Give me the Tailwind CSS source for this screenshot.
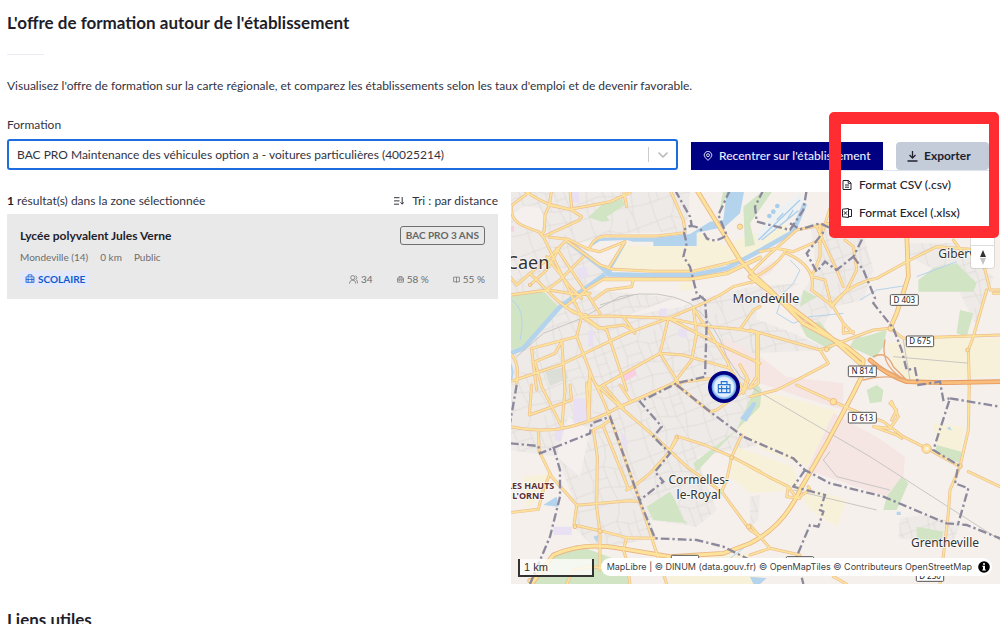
<!DOCTYPE html>
<html lang="fr">
<head>
<meta charset="utf-8">
<meta name="viewport" content="width=device-width, initial-scale=1">
<title>L'offre de formation autour de l'établissement</title>
<script src="https://cdn.jsdelivr.net/npm/@tailwindcss/browser@4"></script>
</head>
<body class="bg-white font-['Lato',sans-serif] text-[12px] leading-4 text-[#33333f] overflow-x-hidden">
<main class="relative pl-[7px]">
  <h2 class="pt-[13px] text-[17px] leading-5 font-bold text-[#1e1e2b]">L'offre de formation autour de l'établissement</h2>
  <hr class="mt-[21px] w-[37px] border-0 h-px bg-[#ececf6]">
  <p class="mt-[23px]">Visualisez l'offre de formation sur la carte régionale, et comparez les établissements selon les taux d'emploi et de devenir favorable.</p>

  <div class="mt-[23px] flex items-end pr-[11px]">
    <div class="flex-1">
      <label for="formation" class="block">Formation</label>
      <div class="relative mt-[6px]">
        <select id="formation" class="block w-full h-[31px] appearance-none rounded-[3px] border-2 border-[#1d6ce0] bg-white pl-2 pr-9 text-[12px] text-[#33333f] outline-none">
          <option>BAC PRO Maintenance des véhicules option a - voitures particulières (40025214)</option>
        </select>
        <span class="pointer-events-none absolute inset-y-2 right-[10px] flex w-5 items-center justify-end border-l border-[#cccccc]">
          <svg class="w-[10px] h-[6px]" viewBox="0 0 10 6" fill="none" stroke="#b8b8b8" stroke-width="1.6" stroke-linecap="round" stroke-linejoin="round"><path d="M1 1l4 4 4-4"/></svg>
        </span>
      </div>
    </div>
    <button type="button" class="ml-[13px] flex h-7 w-[192px] items-center gap-[6px] bg-[#000083] pl-3 font-medium whitespace-nowrap text-[#eeeeff]">
      <svg class="size-[10px] shrink-0" viewBox="0 0 24 24" fill="none" stroke="currentColor" stroke-width="2.2"><path d="M12 22.5l-6.4-6.4a9 9 0 1 1 12.8 0z"/><circle cx="12" cy="10" r="3.5"/></svg>
      Recentrer sur l'établissement
    </button>
    <button type="button" aria-expanded="true" class="ml-[13px] flex h-7 w-[93px] items-center gap-[6px] rounded-[4px] bg-[#c4ccda] pl-[11px] font-bold text-[#22222f]">
      <svg class="size-[11px]" viewBox="0 0 11 11" fill="none" stroke="currentColor" stroke-width="1.3"><path d="M5.500 0v7M2.500 4l3 3 3-3M.5 10h10"/></svg>
      Exporter
    </button>
  </div>

  <div class="mt-[22px] grid grid-cols-[491fr_489fr] gap-[13px]">
    <section>
      <div class="flex h-[22px] items-start justify-between pt-px">
        <p><b class="text-[#1e1e2b]">1</b> résultat(s) dans la zone sélectionnée</p>
        <button type="button" class="flex items-center gap-2 leading-4">
          <svg class="h-2 w-[10px]" viewBox="0 0 10 8" fill="none" stroke="#33333f"><path d="M0 .7h5.500M0 3.900h5.500M0 7.200h5M8.200 0v7M6.500 5.300l1.700 1.900 1.700-1.900"/></svg>
          Tri : par distance
        </button>
      </div>
      <article class="bg-[#e9e9e9] px-[13px] pt-3 pb-3 text-[10px] text-[#6d6d6d]">
        <div class="flex items-center justify-between">
          <h3 class="text-[12px] font-bold text-[#1e1e2b]"><a href="#">Lycée polyvalent Jules Verne</a></h3>
          <span class="rounded-[3px] border border-[#6f6f6f] px-[5px] leading-[17px] font-bold text-[#666666]">BAC PRO 3 ANS</span>
        </div>
        <p class="mt-1 flex gap-3"><span>Mondeville (14)</span><span>0 km</span><span>Public</span></p>
        <div class="mt-[6px] flex items-center justify-between">
          <span class="flex items-center gap-[3px] rounded-[2px] bg-[#e4e8fb] px-[5px] font-bold text-[#0e5bce]">
            <svg class="size-[10px]" viewBox="0 0 24 24" fill="none" stroke="currentColor" stroke-width="2"><path d="M7.500 7V2h9v5M2.500 7h19v13h-19zM2.500 13h19M7.500 10v10M16.500 10v10"/></svg>
            SCOLAIRE
          </span>
          <span class="flex text-[10px]">
            <span class="flex items-center gap-[3px]"><svg class="size-[9px]" viewBox="0 0 24 24" fill="none" stroke="currentColor" stroke-width="2"><circle cx="10" cy="7" r="5.500"/><path d="M1.500 23c0-6 3.500-9 8.500-9s8 3 8 9M17 2c5 1 5 8 1 10 3 1 5 5 5 10"/></svg>34</span>
            <span class="ml-6 flex items-center gap-[3px]"><svg class="size-[7px]" viewBox="0 0 24 24" fill="none" stroke="currentColor" stroke-width="2.500"><path d="M7 7V2h10v5M2 7h20v14H2zM2 13h20M8 13v4M16 13v4"/></svg>58 %</span>
            <span class="ml-6 flex items-center gap-[3px]"><svg class="size-[7px]" viewBox="0 0 24 24" fill="none" stroke="currentColor" stroke-width="2.500"><path d="M2 4h20v16H2zM12 4v19"/></svg>55 %</span>
          </span>
        </div>
      </article>
    </section>

    <section aria-label="Carte" class="relative overflow-hidden">
      <svg class="block w-full" viewBox="3 6 1467 1176" font-family="Noto Sans, sans-serif">
        <defs>
          <pattern id="rues" width="190" height="170" patternUnits="userSpaceOnUse" patternTransform="rotate(-14)">
            <path d="M0 30L70 22L110 40L190 30M0 92L60 84L130 100L190 92M0 140L90 132L190 140M22 0L30 60L20 120L22 170M70 22L78 84L90 132L84 170M84 0L70 22M128 0L126 40L130 100L150 170M150 0L160 95L150 170M40 88L46 136M100 36L106 94M30 60L76 58M126 66L158 64" fill="none" stroke="#dcd8d4" stroke-width="2"/>
          </pattern>
          <g id="zones">
            <path d="M0 0H540L530 125L350 130L250 150L180 165L300 240L250 300L560 330L720 290L870 280L740 350L730 560L780 760L560 800L620 960L560 1010L420 990L440 1040L260 1080L190 1010L200 950L140 800L0 780Z"/>
            <path d="M900 100H1050L1090 240L1060 330L970 350L930 430L850 350L920 240ZM720 380L850 430L960 480L720 490ZM1190 160H1330L1450 260L1400 410L1330 270L1200 200ZM1170 985L1240 975L1350 1000L1330 1060L1165 1045ZM720 920L750 915L745 990L720 1010Z"/>
          </g>
          <g id="routes">
            <path d="M0 50L60 5M5 50Q0 95 50 112L85 125L100 140L215 380M40 0Q75 25 115 42L180 58L235 48L300 35L360 8M125 0L118 45L105 75L103 120L95 135M180 0L185 55M340 0L350 50M115 45L185 60L215 80L205 92L100 140M118 142L175 148L235 178L250 155Q270 135 300 138H440L525 128L520 90L480 0M160 145L270 225L310 238L430 244H550L650 220L690 208M235 178L270 185L345 155L295 235M285 265L235 295L165 350L210 375L215 380L200 440L65 475M165 155L110 210L60 250L20 285L0 260M150 170L110 240L60 285M220 200L150 270L110 300M250 330L290 300L365 290L370 270M60 250L140 330L190 368L230 375M110 200L180 290L215 325M140 175L230 310L270 370M0 315L115 300L210 315L240 310"/>
            <path d="M215 380L300 378L475 385L600 410L690 418L750 430M0 575L150 525L350 430L475 385L580 340L630 315L670 290L750 270M215 380L265 415L340 405L365 420M340 380L375 430M230 385L265 410L290 420L350 600M200 440L250 570L275 620M155 450L165 600M65 480L80 600M155 455L135 490L75 515L95 590L155 710M240 545L235 600M235 690L240 560M475 385L450 490L500 570L510 585M450 490L520 495L660 535L650 510L600 430L550 355L560 430L545 510L490 580L330 650M270 590L450 490M475 385L620 460L750 520M690 418L730 360L750 350M660 535L700 600L710 560L690 525M745 430V580L720 595M710 595L620 660L600 665M600 665L500 585"/>
            <path d="M0 710Q70 725 140 718Q230 705 330 650L490 580L640 560M0 490Q30 515 20 580M65 585L58 675L185 630L180 585M165 600L155 715M240 585L237 690M260 585L300 680L390 935L470 1182M265 590L330 650L440 745L530 830L635 905L720 1020L750 1040M300 690L280 705L250 720L262 800L260 950L270 1030V1140M280 710L355 895M475 790L420 850L370 890L350 900M475 790L505 740L585 765L665 800L750 845M500 740L475 790M695 735L665 800L650 870L635 905M85 725L88 785L125 860L200 945H210L360 932L390 935M200 945L192 1005L270 1022L350 1043L435 1045M350 1043L340 1080L350 1110L360 1182M0 968L85 958L100 900L120 850M170 1182L190 1140L240 1130L290 1135M330 585L360 630M280 585L340 655M230 580L235 690M690 525L715 570L700 610"/>
            <path d="M750 185L800 175L850 185L930 150L960 55L1000 40M720 250L770 200L860 120L960 100M825 185Q800 230 725 265M830 190Q920 230 905 300L970 350L1000 400L1030 430M920 110L980 240L1000 290M930 110L930 200L905 260L945 270L965 350L1010 300L1040 240L1030 170L1005 150M965 345Q1020 280 1100 265L1200 210L1280 170L1410 180L1440 300H1470M1430 300L1390 440L1375 480L1378 590M720 420L930 480L1090 420L1140 415L1180 445L1470 435M1180 445L1240 455M1450 310H1470M930 480L955 520L880 560L800 600L720 620M740 430V560L720 590M1000 400L1000 430L1030 425M1330 150L1360 190"/>
            <path d="M860 585L970 635L1040 665L1120 695L1180 740L1250 775L1350 830L1320 900L1315 970L1290 1182M1378 580L1375 720L1350 830M1145 690L1160 660L1140 640L1145 635L1165 680L1140 715L1090 710L1160 735L1175 745M1375 845L1470 890M720 830L785 865L835 890L860 925L900 900L895 890M835 890L830 920L870 925M720 1005L780 1075L870 1095M720 1095L780 1075M970 1160L1010 1182"/>
          </g>
          <g id="axes">
            <path d="M560 0L690 210L730 255L770 290L880 400L1010 470L1060 510L1055 560L1030 610L950 760L870 900Q820 1010 720 1060L640 1090L480 1100L330 1075Q220 1055 130 1095L65 1182M720 260L960 440L1050 520M1190 130L1195 260L1160 370L1140 415"/>
          </g>
          <radialGradient id="halo"><stop offset="0" stop-color="#eaf3ff"/><stop offset=".58" stop-color="#e4f0ff"/><stop offset=".74" stop-color="#6ea6e8"/><stop offset=".8" stop-color="#000080"/></radialGradient>
        </defs>

        <path fill="#f5f0ec" d="M0 0H1480V1190H0Z"/>
        <use href="#zones" fill="#eeeae7"/>
        <use href="#zones" fill="url(#rues)"/>
        <path fill="#f5f0ed" d="M10 70L45 48L90 55L105 90L90 130L40 115L10 95ZM175 680L240 720L210 860L140 800ZM480 330L560 320L520 350L450 360L330 385Z"/>
        <g fill="#f8f1da">
          <path d="M345 165L430 168H555L560 125L640 165L750 125V195L560 243L305 240ZM505 280L550 275L545 300L510 302ZM750 125L790 60L840 120L760 190Z"/>
          <path d="M1130 460L1330 440L1470 445V560L1190 570L1150 530ZM720 600L830 620L985 665L890 830L760 780L680 720L760 620ZM680 770L850 830L870 900L720 910L660 860ZM850 880L1010 930L980 1010L900 960ZM1060 800L1180 870L1170 895L1050 820ZM1270 700L1360 710L1355 790L1280 770ZM40 860L120 850L110 900L50 960ZM480 1110L720 1090L760 1182H480Z"/>
        </g>
        <g fill="#f5e6e4">
          <path d="M640 440L750 500L830 560L1000 580V660L870 620L720 570L650 510ZM970 670L1100 740L1185 800L1180 860L1130 920L890 840ZM740 240L800 210L790 240L720 290Z"/>
        </g>
        <g fill="#e9e1f3">
          <path d="M180 5H205L210 40L185 35ZM200 235L230 230L235 260L210 270ZM450 355H470V380H450ZM505 415L530 420V445L505 440ZM235 420H250V470H235ZM190 625H230V690L190 700ZM135 700L160 720L150 755L135 750ZM130 1010H185V1035H130ZM330 720L355 760L340 780Z"/>
        </g>
        <path fill="#f9d0e2" d="M335 550L375 535L380 555L345 575ZM0 108H12V125H0Z"/>
        <path fill="#dcdfd7" d="M105 545L165 530L175 565L120 588ZM1035 440H1095V470H1040Z"/>
        <g fill="#d1e4c3">
          <path d="M0 318L95 298L145 350L40 470L0 480ZM235 82L280 40L335 25L345 45L290 80L300 92L275 95ZM640 0H655L625 80ZM700 50L750 10L790 0L720 100L735 165L705 170Z"/>
          <path d="M410 950L480 905L495 930L520 990L535 1000L430 990ZM550 820L680 720L740 580L755 600L750 650L640 760L560 845ZM1225 270L1270 235L1340 220L1400 280L1390 305L1225 305ZM870 405L930 395L980 460L960 480L890 440ZM1030 450L1130 420L1120 470L1095 505L1020 470ZM1070 600L1100 585L1120 600L1115 635L1080 640ZM1280 765L1355 785L1350 820L1275 785ZM1130 920L1175 860L1195 880L1160 960L1120 960ZM1220 1010L1300 1025L1290 1060L1220 1050ZM80 1130L200 1065L350 1120L360 1182H70ZM880 300L920 320L870 350ZM1350 360L1390 370L1370 440L1340 430Z"/>
        </g>
        <g fill="#b4d4ee">
          <path d="M235 175L255 152Q272 142 300 143H430L540 132L600 95L640 90L650 6H702L690 70L645 110L560 128V168H430V155H370L350 150L270 153Z"/>
          <path d="M690 685L730 635L740 640L710 695ZM115 935L140 920L145 950L100 945ZM250 1040L265 1035L262 1060ZM1310 715L1320 710L1325 722ZM720 1160L770 1165L750 1182H730ZM1160 965H1172V975H1160Z"/>
        </g>
        <g fill="none" stroke="#b4d4ee" stroke-width="14">
          <path d="M175 155L285 240L295 253L430 256H550L650 235L750 182L850 125L885 40M285 253L150 350L40 475L0 490"/>
          <path stroke-width="6" d="M345 160L300 240M0 520Q15 550 0 575"/>
          <path stroke-width="3" d="M5 330Q50 360 30 450M840 210L870 240L850 280L820 310L800 370L850 400L900 380L1000 370M1180 288L1100 300L1050 330M1220 260L1340 215M640 1120L720 1060"/>
        </g>
        <path fill="#eef1f2" d="M735 140L800 60L870 10L880 30L865 60L790 125L750 150Z"/>
        <g stroke="#a9cdeb" stroke-width="4" fill="#a9cdeb"><path d="M745 150L870 30M755 150L865 62M800 90L820 70M830 90L850 60" fill="none"/><circle cx="778" cy="78" r="5"/><circle cx="790" cy="65" r="5"/><circle cx="802" cy="48" r="5"/></g>
        <path d="M20 500L100 430L215 385L330 320Q450 295 540 340Q620 400 650 500L690 560L740 600M270 345L370 315M720 590L1080 800L1470 1050M960 785L940 810L980 860L1140 900M850 900L1100 960M1150 500L1380 520M1180 450L1200 570" fill="none" stroke="#c9c6c2" stroke-width="3"/>

        <g fill="none" stroke-linejoin="round" stroke-linecap="round">
          <use href="#routes" stroke="#ecbf92" stroke-width="9"/>
          <path d="M285 268H540L650 250L750 203" stroke="#ecbf92" stroke-width="12"/>
          <use href="#axes" stroke="#e9b585" stroke-width="14"/>
          <use href="#routes" stroke="#fde39a" stroke-width="5"/>
          <path d="M285 268H540L650 250L750 203" stroke="#fde39a" stroke-width="8"/>
          <use href="#axes" stroke="#fde39a" stroke-width="9"/>
          <path d="M1080 510Q1130 555 1190 575L1300 578L1470 575" stroke="#e4955c" stroke-width="14"/>
          <path d="M1080 510Q1130 555 1190 575L1300 578L1470 575" stroke="#f9bd7c" stroke-width="9"/>
          <path d="M1085 520L1150 550L1190 570M1090 500Q1130 480 1150 530L1190 570M1125 450Q1110 520 1170 560M1060 570Q1130 550 1200 572" stroke="#e5a877" stroke-width="4"/>
          <g fill="#fde39a" stroke="#ecbd8c" stroke-width="3"><circle cx="60" cy="285" r="5"/><circle cx="270" cy="1023" r="7"/><circle cx="195" cy="1010" r="6"/><circle cx="500" cy="740" r="5"/><circle cx="690" cy="110" r="8"/><circle cx="1143" cy="415" r="9"/><circle cx="950" cy="478" r="7"/><circle cx="970" cy="635" r="10"/><circle cx="1250" cy="776" r="14"/><circle cx="716" cy="1010" r="7"/><circle cx="665" cy="803" r="6"/><circle cx="1350" cy="828" r="7"/><circle cx="60" cy="1172" r="7"/><circle cx="1373" cy="480" r="6"/></g>
          <circle cx="1250" cy="776" r="6" fill="#f5f0ed"/>
        </g>
        <circle cx="297" cy="249" r="10" fill="#b4d4ee"/>

        <g fill="none" stroke="#8d899d" stroke-width="7" stroke-dasharray="26 9 7 9">
          <path d="M495 0L540 80L545 105L520 120L530 160L520 200L540 230L560 310L585 330L590 400L585 560L500 580L390 635L455 710L430 740L480 790L435 845L460 875L390 930"/>
          <path d="M545 330L580 320M660 0L625 75L650 135Q620 160 590 145Q570 100 530 110"/>
          <path d="M760 0L735 50L740 95L840 120L880 60L890 0M840 100L870 118L930 100L985 125L1050 120L1060 140L1030 200L980 240L945 215L920 245L890 190L945 120M1030 200L1060 240L1095 325L1090 340L1150 415L1175 480L1190 540L1215 535L1225 585L1290 575L1300 630L1320 625L1270 780L1345 825L1335 880L1375 895L1345 1000"/>
          <path d="M500 585L600 665L700 740L850 805L885 840L960 880L1120 920L1310 1000L1370 1005L1470 1045M1320 625L1470 650M885 840L850 890L945 915L930 960L940 965L925 1010L900 1005L860 1100L880 1182"/>
          <path d="M0 760L85 768L90 790L240 730L245 700L300 680L390 935L435 1045L560 1050L640 1070L720 1110M130 770L150 840V920L120 1040L60 1182M20 585L0 700"/>
        </g>

        <g fill="#333333" stroke="#ffffff" stroke-opacity=".75" stroke-width="5" paint-order="stroke" stroke-linejoin="round">
          <text x="118" y="238" text-anchor="end" font-size="54">Caen</text>
          <text x="768" y="340" text-anchor="middle" font-size="39">Mondeville</text>
          <text x="1285" y="205" font-size="36">Giberville</text>
          <text x="566" y="882" text-anchor="middle" font-size="36">Cormelles-</text>
          <text x="566" y="926" text-anchor="middle" font-size="36">le-Royal</text>
          <text x="1305" y="1072" text-anchor="middle" font-size="36">Grentheville</text>
          <g fill="#5b2f36" font-size="27" font-weight="700" text-anchor="end"><text x="133" y="897">LES HAUTS</text><text x="103" y="926">DE L'ORNE</text></g>
        </g>
        <g fill="#ffffff" stroke="#555555" stroke-width="3"><rect x="1141" y="314" width="84" height="32" rx="3"/><rect x="1189" y="438" width="82" height="32" rx="3"/><rect x="1015" y="528" width="84" height="32" rx="3"/><rect x="1015" y="667" width="84" height="32" rx="3"/><rect x="1219" y="1144" width="82" height="30" rx="3"/><rect x="484" y="1096" width="82" height="30" rx="3"/><rect x="829" y="1100" width="82" height="30" rx="3"/></g>
        <g fill="#222222" font-size="24" text-anchor="middle"><text x="1183" y="339">D 403</text><text x="1230" y="463">D 675</text><text x="1057" y="553">N 814</text><text x="1057" y="692">D 613</text><text x="1260" y="1168">D 230</text></g>
        <circle cx="642" cy="591" r="48" fill="url(#halo)"/>
        <path d="M634 584V575H651V584M625 584H660V608H625ZM625 596H660M635 588V608M650 588V608" fill="none" stroke="#2a74cf" stroke-width="3.500"/>
      </svg>
      <div class="absolute right-[6px] top-[26px] h-[50px] w-[23px] overflow-hidden rounded-[3px] bg-white shadow-[0_0_0_1px_#00000018]">
        <button type="button" aria-label="Réinitialiser le nord" class="absolute inset-x-0 bottom-0 flex h-[23px] items-center justify-center border-t border-[#dddddd]">
          <svg class="h-[15px] w-2" viewBox="0 0 8 15"><path d="M4 0l3 7H1z" fill="#333333"/><path d="M4 15l3-7H1z" fill="#c4c4c4"/></svg>
        </button>
      </div>
      <div class="absolute bottom-[7px] left-[7px] h-[18px] w-[76px] border-2 border-t-0 border-[#333333] bg-white/75 pl-1 font-['Liberation_Sans'] text-[11px] leading-4 text-[#333333]">1 km</div>
      <div class="absolute right-2 bottom-2 flex h-[18px] items-center gap-[6px] rounded-full bg-white pr-[2px] pl-[6px] font-['Inter',sans-serif] text-[9px] whitespace-nowrap text-[#404040]">
        <span><a href="#">MapLibre</a> | <a href="#">© DINUM (data.gouv.fr)</a> <a href="#">© OpenMapTiles</a> <a href="#">© Contributeurs OpenStreetMap</a></span>
        <svg class="size-[12px]" viewBox="0 0 12 12"><circle cx="6" cy="6" r="5.800" fill="#000"/><path d="M5 2.200h2v1.600H5zM4.300 4.800H7v3.800h.8v1H4.300v-1H5V5.800h-.7z" fill="#fff"/></svg>
      </div>
    </section>
  </div>

  <h2 class="mt-[26px] h-[14px] overflow-hidden text-[17px] leading-5 font-bold text-[#1e1e2b]">Liens utiles</h2>

  <div class="absolute top-[112px] right-px h-[126px] w-[170px] rounded-[5px] border-12 border-r-[10px] border-[#ff2d32]">
    <ul class="mt-[46px] h-14 border-t border-[#dde5ee] bg-white font-medium text-[#22222f]">
      <li><button type="button" class="flex h-[28px] items-center gap-[7px] pl-px"><svg class="size-[10px]" viewBox="0 0 10 10" fill="none" stroke="currentColor"><path d="M1 .5h5.500l2.500 2.500v6.500H1zM6.200.5V3.300H9M3 5h4M3 7.200h4"/></svg>Format CSV (.csv)</button></li>
      <li><button type="button" class="flex h-[27px] items-center gap-[7px] pl-px"><svg class="size-[10px]" viewBox="0 0 10 10" fill="none" stroke="currentColor"><path d="M.5 1.200L6.500.5v9L.5 8.800zM6.500 1.500h3v7h-3M2 3.300l3 3.400M5 3.300L2 6.700"/></svg>Format Excel (.xlsx)</button></li>
    </ul>
  </div>
</main>
</body>
</html>
